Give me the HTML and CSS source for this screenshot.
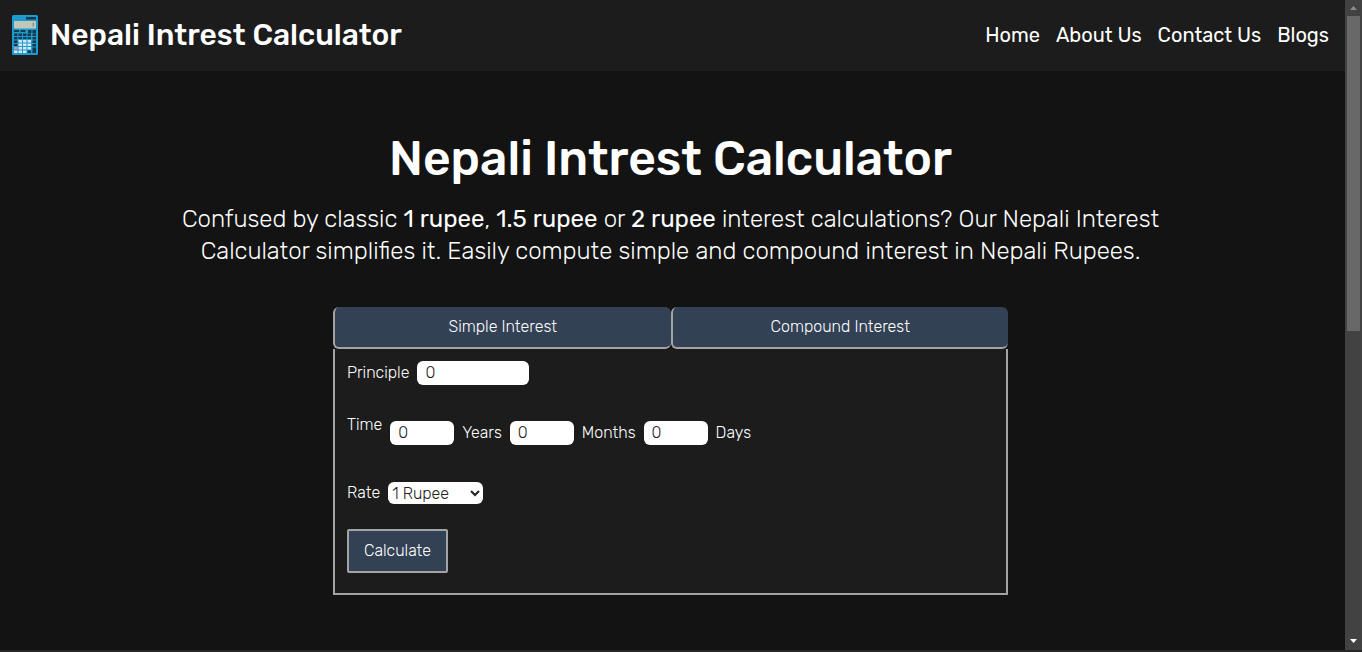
FILE: index.html
```html
<!DOCTYPE html>
<html lang="en">
<head>
<meta charset="utf-8">
<meta name="viewport" content="width=device-width, initial-scale=1">
<title>Nepali Intrest Calculator</title>
<link rel="stylesheet" href="styles.css">
</head>
<body>
<div class="viewport">
  <div class="page">
    <header class="site-header">
      <a class="brand" href="#">
        <svg class="brand-icon" viewBox="0 0 26 40" aria-hidden="true">
          <rect width="26" height="40" rx="1.5" fill="#1c9bd0"/>
          <rect x="14" y="2" width="10" height="2.5" fill="#12364a"/>
          <rect x="2" y="6" width="22" height="7.5" rx="1" fill="#c3c7b8"/>
          <rect x="20.5" y="7.5" width="1.5" height="4" fill="#9a8f86"/>
          <path fill="#17394c" d="M2 15h5v2H2zM8.500 15h5v2h-5zM16 15h3.500v3H16zM20.500 15H24v3h-3.500zM2 18.500h3.500v2.500H2zM6.500 18.500H10v2.500H6.500zM11 18.500h3.500v2.500H11zM15.500 18.500H19v2.500h-3.500zM20.500 18.500H24v2.500h-3.500zM2 22h3.500v2.500H2zM6.500 22H10v2H6.500zM11 22h3.500v2H11zM15.500 22H19v2h-3.500zM20.500 22H24v2.500h-3.500zM2 25.500h3.500V28H2zM20.500 25.500H24V28h-3.500zM2 29h3.500v2H2zM20.500 29H24v2.500h-3.500zM20.500 32.500H24V38h-3.500zM15.500 35.500H19V38h-3.500z"/>
          <path fill="#d5e8ef" d="M6.500 25H10v2.500H6.500zM11 25h3.500v2.500H11zM15.500 25H19v2.500h-3.500zM6.500 28.500H10V31H6.500zM11 28.500h3.500V31H11zM15.500 28.500H19V31h-3.500zM6.500 32H10v2.500H6.500zM11 32h3.500v2.500H11zM15.500 32H19v2.500h-3.500zM2 35.500h3.500V38H2zM6.500 35.500H10V38H6.500zM11 35.500h3.500V38H11z"/>
          <rect x="2" y="32" width="3.500" height="2.500" fill="#d391b4"/>
        </svg>
        <span class="brand-name">Nepali Intrest Calculator</span>
      </a>
      <nav class="site-nav">
        <a href="#">Home</a>
        <a href="#">About Us</a>
        <a href="#">Contact Us</a>
        <a href="#">Blogs</a>
      </nav>
    </header>
    <main class="main">
      <h1 class="title">Nepali Intrest Calculator</h1>
      <p class="intro">Confused by classic <strong>1 rupee</strong>, <strong>1.5 rupee</strong> or <strong>2 rupee</strong> interest calculations? Our Nepali Interest Calculator simplifies it. Easily compute simple and compound interest in Nepali Rupees.</p>
      <section class="calculator">
        <div class="tabs">
          <button class="tab" type="button">Simple Interest</button>
          <button class="tab" type="button">Compound Interest</button>
        </div>
        <form class="panel">
          <div class="row">
            <label for="principle">Principle</label>
            <input class="field field-wide" id="principle" type="text" inputmode="numeric" value="0">
          </div>
          <div class="row row-time">
            <span class="time-label">Time</span>
            <div class="time-fields">
              <input class="field" id="years" type="text" inputmode="numeric" value="0">
              <label for="years">Years</label>
              <input class="field" id="months" type="text" inputmode="numeric" value="0">
              <label for="months">Months</label>
              <input class="field" id="days" type="text" inputmode="numeric" value="0">
              <label for="days">Days</label>
            </div>
          </div>
          <div class="row row-rate">
            <label for="rate">Rate</label>
            <select class="rate" id="rate">
              <option>1 Rupee</option>
              <option>1.5 Rupee</option>
              <option>2 Rupee</option>
            </select>
          </div>
          <button class="calculate" type="button">Calculate</button>
        </form>
      </section>
    </main>
  </div>
  <div class="scrollbar" aria-hidden="true">
    <svg class="arrow" viewBox="0 0 17 16"><path fill="#8b8b8b" d="M5 10l3.500-4 3.500 4z"/></svg>
    <div class="track"><div class="thumb"></div></div>
    <svg class="arrow" viewBox="0 0 17 16"><path fill="#fff" d="M5 5l3.500 4L12 5z"/></svg>
  </div>
</div>
</body>
</html>
```
FILE: styles.css
```css
* { box-sizing: border-box; }

body {
  margin: 0;
  background: #131313;
  color: #fff;
  font-family: Rubik, Roboto, sans-serif;
  font-size: 16px;
  font-weight: 300;
}

.viewport {
  display: flex;
  min-height: 100vh;
  border-bottom: 2px solid #272727;
}

.page { flex: 1; min-width: 0; }

.site-header {
  display: flex;
  align-items: center;
  justify-content: space-between;
  padding: 15px 16px 16px 12px;
  background: #1c1c1c;
}

.brand {
  display: flex;
  align-items: center;
  gap: 12px;
  color: inherit;
  text-decoration: none;
}

.brand-icon { width: 26px; height: 40px; }

.brand-name { font-size: 30px; font-weight: 500; line-height: 40px; }

.site-nav { display: flex; gap: 16px; }

.site-nav a {
  color: inherit;
  font-size: 20px;
  font-weight: 400;
  line-height: 24px;
  text-decoration: none;
}

.main {
  display: flex;
  flex-direction: column;
  align-items: center;
  padding: 64px 20px 54px 16px;
  text-align: center;
}

.title {
  margin: 0;
  font-size: 48px;
  font-weight: 500;
  line-height: 48px;
}

.intro {
  max-width: 1008px;
  margin: 20px 0 40px;
  font-size: 24px;
  line-height: 32px;
}

.intro strong { font-weight: 400; }

.calculator { width: 52%; min-width: 480px; max-width: 675px; }

.tabs { display: flex; }

.tab {
  flex: 1;
  padding: 8px;
  border: 0 solid #a3a3a3;
  border-width: 0 0 2px 2px;
  border-radius: 6px;
  background: #334155;
  color: inherit;
  font: inherit;
  line-height: 24px;
}

.panel {
  padding: 12px 12px 20px;
  border: 2px solid #a3a3a3;
  border-top: 0;
  background: #1c1c1c;
  line-height: 24px;
  text-align: left;
}

.row { display: flex; gap: 8px; }

.row-time { margin-top: 28px; }

.time-fields { display: flex; gap: 8px; padding-top: 8px; }

.row-rate { align-items: center; margin-top: 36px; }

.field {
  width: 64px;
  height: 24px;
  padding: 0 8px;
  border: 0;
  border-radius: 6px;
  background: #fff;
  color: #222;
  font: inherit;
}

.field-wide { width: 112px; }

.rate {
  width: 95px;
  height: 22px;
  padding: 0;
  border: 0;
  border-radius: 6px;
  background: #fff;
  color: #222;
  font: inherit;
}

.calculate {
  display: block;
  margin-top: 24px;
  padding: 8px 15px;
  border: 2px solid #a3a3a3;
  border-radius: 2px;
  background: #334155;
  color: inherit;
  font: inherit;
  line-height: 24px;
}

.scrollbar {
  display: flex;
  flex-direction: column;
  width: 17px;
  background: #424242;
}

.arrow { width: 17px; height: 16px; }

.track { flex: 1; padding: 0 2px; }

.thumb { height: 51%; background: #686868; }
```
